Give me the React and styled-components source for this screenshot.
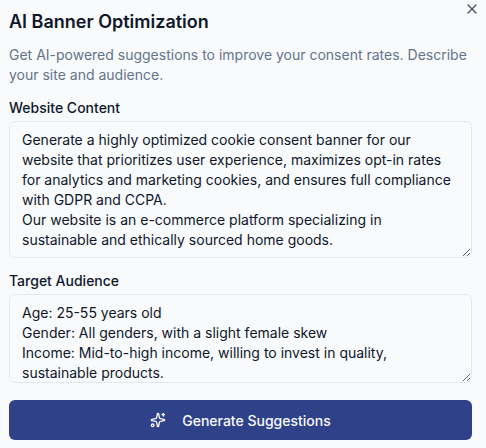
import React from "react";
import styled, { createGlobalStyle } from "styled-components";
import { Sparkles, X } from "lucide-react";

const GlobalStyle = createGlobalStyle`
  html, body {
    margin: 0;
    padding: 0;
    background: #f8fafc;
  }
  * {
    box-sizing: border-box;
  }
`;

const websiteContent = `Generate a highly optimized cookie consent banner for our website that prioritizes user experience, maximizes opt-in rates for analytics and marketing cookies, and ensures full compliance with GDPR and CCPA.
Our website is an e-commerce platform specializing in sustainable and ethically sourced home goods.`;

const targetAudience = `Age: 25-55 years old
Gender: All genders, with a slight female skew
Income: Mid-to-high income, willing to invest in quality, sustainable products.`;

const App = () => {
  return (
    <Dialog>
      <GlobalStyle />
      <CloseButton aria-label="Close">
        <X size={16} strokeWidth={2} />
      </CloseButton>
      <Header>
        <Title>AI Banner Optimization</Title>
        <Description>
          Get AI-powered suggestions to improve your consent rates. Describe
          your site and audience.
        </Description>
      </Header>
      <Field $after={13}>
        <Label>Website Content</Label>
        <TextArea $height={137} defaultValue={websiteContent} />
      </Field>
      <Field $after={17}>
        <Label>Target Audience</Label>
        <TextArea $height={89} defaultValue={targetAudience} />
      </Field>
      <SubmitButton>
        <Sparkles size={16} strokeWidth={2} />
        Generate Suggestions
      </SubmitButton>
    </Dialog>
  );
};

export default App;

const Dialog = styled.div`
  position: relative;
  width: 486px;
  height: 448px;
  overflow: hidden;
  padding: 10px 14px 8px 9px;
  display: flex;
  flex-direction: column;
  background: #f8fafc;
  font-family: Inter, "Liberation Sans", sans-serif;
`;

const CloseButton = styled.button`
  position: absolute;
  top: 1px;
  right: 6px;
  width: 16px;
  height: 16px;
  padding: 0;
  border: none;
  background: transparent;
  color: #475569;
  line-height: 0;
`;

const Header = styled.div`
  display: flex;
  flex-direction: column;
  gap: 11px;
  margin-bottom: 13px;
`;

const Title = styled.h2`
  margin: 0;
  font-size: 18px;
  line-height: 24px;
  font-weight: 600;
  color: #0f172a;
`;

const Description = styled.p`
  margin: 0;
  font-size: 14px;
  line-height: 20px;
  color: #64748b;
`;

const Field = styled.div`
  display: flex;
  flex-direction: column;
  gap: 3px;
  margin-bottom: ${(p) => p.$after}px;
`;

const Label = styled.label`
  font-size: 14px;
  line-height: 20px;
  font-weight: 500;
  color: #0f172a;
`;

const TextArea = styled.textarea`
  display: block;
  width: 100%;
  height: ${(p) => p.$height}px;
  padding: 8px 12px;
  border: 1px solid #e2e8f0;
  border-radius: 6px;
  outline: none;
  background: #f8fafc;
  color: #0f172a;
  font-family: inherit;
  font-size: 14px;
  line-height: 20px;
  scrollbar-width: none;
`;

const SubmitButton = styled.button`
  display: flex;
  align-items: center;
  justify-content: center;
  gap: 16px;
  width: 100%;
  height: 40px;
  flex: none;
  border: none;
  border-radius: 6px;
  background: #2f4189;
  color: #f8fafc;
  font-family: inherit;
  font-size: 14px;
  font-weight: 500;
`;
